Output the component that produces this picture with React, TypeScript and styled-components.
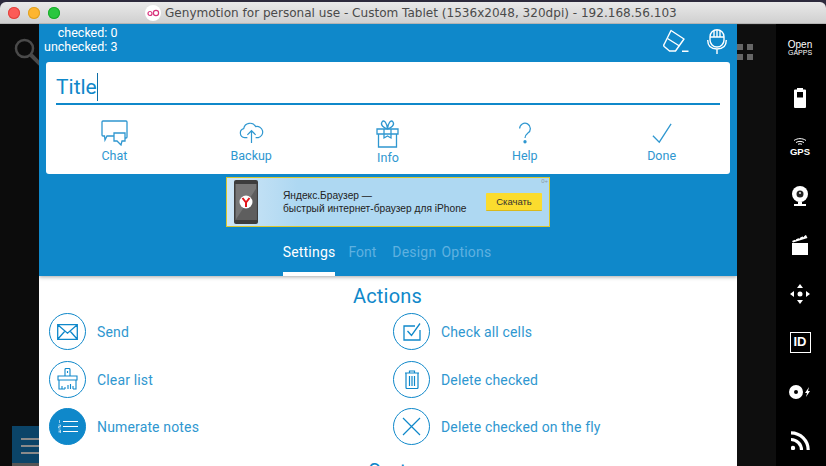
import React from 'react'
import styled, { createGlobalStyle } from 'styled-components'

const BLUE = '#0f88ca'

const GlobalStyle = createGlobalStyle`
  html, body { margin: 0; padding: 0; background: #2c2a3c; overflow: hidden; }
  body { font-family: Roboto, "Liberation Sans", sans-serif; }
`

const Window = styled.div`
  width: 826px;
  height: 466px;
  padding-top: 2px;
  box-sizing: border-box;
  display: flex;
  flex-direction: column;
  overflow: hidden;
`

const TitleBar = styled.div`
  height: 22px;
  flex: none;
  border-radius: 6px 6px 0 0;
  background: linear-gradient(#e9e9e9, #d0d0d0);
  border-bottom: 1px solid #b4b4b4;
  box-sizing: border-box;
  display: flex;
  align-items: center;
  position: relative;
`

const Lights = styled.div`
  display: flex;
  gap: 8px;
  padding-left: 8px;
`

const Light = styled.span<{ $color: string; $edge: string }>`
  width: 12px;
  height: 12px;
  border-radius: 50%;
  background: ${({ $color }) => $color};
  box-shadow: inset 0 0 0 1px ${({ $edge }) => $edge};
`

const WindowTitle = styled.div`
  position: absolute;
  left: 145px;
  top: 0;
  height: 22px;
  display: flex;
  align-items: center;
  gap: 4px;
  font-family: "DejaVu Sans", sans-serif;
  font-size: 12.05px;
  color: #4a4a4a;
  white-space: nowrap;
`

const Body = styled.div`
  flex: 1;
  min-height: 0;
  display: flex;
`

const LeftGutter = styled.div`
  width: 39px;
  flex: none;
  background: #0c0c0c;
  display: flex;
  flex-direction: column;
  justify-content: space-between;
  overflow: hidden;
`

const SearchSlot = styled.div`
  padding: 14px 0 0 14px;
`

const MenuTile = styled.div`
  margin-left: 12px;
  height: 40px;
  width: 27px;
  flex: none;
  background: #0b4468;
  box-sizing: border-box;
  padding: 12px 0 0 9px;
  display: flex;
  flex-direction: column;
  gap: 5px;
  border-bottom: 3px solid #555;
`

const MenuBar = styled.span`
  display: block;
  height: 2px;
  background: #8a8a8a;
`

const Dialog = styled.div`
  width: 698px;
  flex: none;
  display: flex;
  flex-direction: column;
  background: #fff;
  overflow: hidden;
`

const Header = styled.div`
  height: 252px;
  flex: none;
  background: ${BLUE};
  box-shadow: 0 1px 4px rgba(0, 0, 0, 0.35);
  padding: 0 7px;
  box-sizing: border-box;
  display: flex;
  flex-direction: column;
  position: relative;
`

const TopRow = styled.div`
  height: 38px;
  flex: none;
  display: flex;
  align-items: flex-start;
  justify-content: space-between;
`

const Counters = styled.div`
  padding-top: 2px;
  font-size: 12.5px;
  line-height: 14px;
  color: #fff;
  text-align: right;
  margin-left: -2px;
`

const TopIcons = styled.div`
  display: flex;
  gap: 18px;
  padding: 5px 3px 0 0;
`

const Card = styled.div`
  height: 112px;
  flex: none;
  background: #fff;
  border-radius: 3px;
  display: flex;
  flex-direction: column;
`

const TitleField = styled.div`
  margin: 0 10px;
  height: 39px;
  flex: none;
  border-bottom: 2px solid ${BLUE};
  display: flex;
  align-items: flex-end;
  padding-bottom: 2px;
  box-sizing: content-box;
  font-size: 21px;
  line-height: 28px;
  color: ${BLUE};
`

const Caret = styled.span`
  width: 1.5px;
  height: 28px;
  background: #0d6ea6;
`

const Tools = styled.div`
  flex: 1;
  display: grid;
  grid-template-columns: repeat(5, 1fr);
`

const Tool = styled.div`
  display: flex;
  flex-direction: column;
  align-items: center;
  justify-content: flex-start;
  padding-top: 14px;
  font-size: 12.5px;
  line-height: 14px;
  color: #2f97d0;
`

const ToolIcon = styled.div<{ $tall?: boolean }>`
  height: 28px;
  display: flex;
  align-items: center;
  justify-content: center;
  margin-bottom: ${({ $tall }) => ($tall ? '3.5px' : '1.5px')};
`

const AdSlot = styled.div`
  display: flex;
  justify-content: center;
  padding-top: 3px;
`

const Ad = styled.div`
  width: 324px;
  height: 50px;
  box-sizing: border-box;
  border: 1px solid #d9c62e;
  background: linear-gradient(90deg, #cfe6f6 0, #aed8f2 22%);
  display: flex;
  align-items: center;
  padding: 0 7px;
  position: relative;
  font-family: "Liberation Sans", sans-serif;
`

const AdText = styled.div`
  margin-left: 25px;
  flex: 1;
  font-size: 10.2px;
  line-height: 13px;
  color: #222;
  white-space: nowrap;
`

const AdButton = styled.div`
  width: 56px;
  height: 17px;
  background: #fbdc2e;
  border-bottom: 1px solid #d9b91c;
  border-radius: 1px;
  font-size: 9.5px;
  line-height: 17px;
  text-align: center;
  color: #333;
`

const AgeMark = styled.span`
  position: absolute;
  top: 0;
  right: 1px;
  font-size: 6px;
  color: #8b9aa5;
`

const Tabs = styled.div`
  flex: 1;
  display: flex;
  justify-content: center;
  gap: 13px;
  padding-right: 2px;
`

const Tab = styled.div<{ $active?: boolean }>`
  height: 100%;
  box-sizing: border-box;
  padding-top: 17px;
  font-size: 14px;
  letter-spacing: 0.2px;
  word-spacing: 1.5px;
  line-height: 17px;
  color: ${({ $active }) => ($active ? '#fff' : '#5fb1e0')};
  border-bottom: ${({ $active }) => ($active ? '4px solid #fff' : '4px solid transparent')};

  &:nth-child(2) {
    letter-spacing: 0;
  }
  &:last-child {
    margin-left: 3px;
  }
`

const Content = styled.div`
  flex: 1;
  min-height: 0;
  padding: 8px 10px 0;
  color: #2f97d0;
`

const SectionTitle = styled.div`
  font-size: 20px;
  line-height: 24px;
  text-align: center;
  letter-spacing: 0.2px;
  color: ${BLUE};
  padding-right: 1px;
`

const ActionGrid = styled.div`
  margin-top: 5px;
  display: grid;
  grid-template-columns: 344px 1fr;
  grid-auto-rows: 37px;
  row-gap: 10.5px;
`

const Action = styled.div`
  display: flex;
  align-items: center;
  gap: 11px;
  font-size: 14px;
  letter-spacing: 0.15px;
`

const ActionLabel = styled.span`
  padding-top: 1px;
`

const Circle = styled.div<{ $filled?: boolean }>`
  width: 37px;
  height: 37px;
  box-sizing: border-box;
  flex: none;
  border-radius: 50%;
  border: 1.5px solid ${BLUE};
  background: ${({ $filled }) => ($filled ? BLUE : 'transparent')};
  color: ${({ $filled }) => ($filled ? '#fff' : BLUE)};
  display: flex;
  align-items: center;
  justify-content: center;
`

const NextTitle = styled(SectionTitle)`
  margin-top: 14px;
`

const RightGutter = styled.div`
  width: 39px;
  flex: none;
  background: #0e0e0e;
  border-top: 1px solid #1c1c1c;
  box-sizing: border-box;
  padding-top: 19px;
`

const Dots = styled.div`
  display: grid;
  grid-template-columns: 6px 6px;
  gap: 4px;
`

const Dot = styled.span`
  height: 6px;
  background: #666;
`

const SideBar = styled.div`
  width: 50px;
  flex: none;
  background: #000;
  display: flex;
  flex-direction: column;
  align-items: center;
  color: #fff;
`

const SideItem = styled.div`
  height: 49px;
  flex: none;
  display: flex;
  flex-direction: column;
  align-items: center;
  justify-content: center;
  gap: 1px;
  padding-right: 2px;
`

const OpenLabel = styled.div`
  font-size: 10px;
  line-height: 9px;
  text-align: center;
  font-family: "Liberation Sans", sans-serif;
  span {
    display: block;
    font-size: 7px;
    line-height: 8px;
  }
`

const GpsLabel = styled.div`
  font-family: "Liberation Sans", sans-serif;
  font-weight: 700;
  font-size: 9.5px;
  line-height: 9px;
`

const IdBox = styled.div`
  width: 21px;
  height: 21px;
  box-sizing: border-box;
  border: 1.5px solid #fff;
  font-family: "Liberation Sans", sans-serif;
  font-weight: 700;
  font-size: 13px;
  line-height: 18px;
  text-align: center;
`

const line = { fill: 'none', stroke: 'currentColor', strokeWidth: 1.3 }

const ChatIcon = () => (
  <svg width="27" height="26" viewBox="0 0 27 26" {...line}>
    <path d="M2 1h23a1 1 0 0 1 1 1v15a1 1 0 0 1-1 1h-1M13 16H6l-2 4-.5-4H2a1 1 0 0 1-1-1V2a1 1 0 0 1 1-1" />
    <path d="M13 13h11v8h-3l-1 4-4-4h-3z" />
  </svg>
)
const CloudIcon = () => (
  <svg width="27" height="22" viewBox="0 0 27 24" {...line}>
    <path d="M9 17H6a5 5 0 0 1-1-9.800A7 7 0 0 1 18 5a5.500 5.500 0 0 1 3 12h-3" />
    <path d="M13.500 23V10M9 14l4.500-4.500L18 14" />
  </svg>
)
const GiftIcon = () => (
  <svg width="23" height="29" viewBox="0 0 23 29" {...line}>
    <path d="M1 10h21v5H1zM2.500 15v13h18V15M8 10v9l3.500-2 3.500 2v-9" />
    <path d="M11.500 10C8 9 4 6 6 3s5 1 5.500 7c.5-6 3.500-10 5.500-7s-2 6-5.500 7z" />
  </svg>
)
const HelpIcon = () => (
  <svg width="14" height="23" viewBox="0 0 17 26" {...line}>
    <path d="M2 7a6.500 6.500 0 1 1 10 5.500c-2 1.500-3.500 2.500-3.500 6" strokeWidth="1.5" />
    <circle cx="8.500" cy="23" r="2" fill="currentColor" stroke="none" />
  </svg>
)
const DoneIcon = () => (
  <svg width="20" height="21" viewBox="0 0 22 23" {...line}>
    <path d="M1 14l7 7L21 1" strokeWidth="1.4" />
  </svg>
)
const EraserIcon = () => (
  <svg width="26" height="24" viewBox="0 0 26 24" fill="none" stroke="#fff" strokeWidth="1.4">
    <path d="M8 1.500l13 8.500-8.500 12H6.500L1.200 17.500c-.6-.7-.6-1.500 0-2.300z" strokeLinejoin="round" />
    <path d="M4.500 9.500L16.500 17M19 22.300h6.500" />
  </svg>
)
const MicIcon = () => (
  <svg width="20" height="25" viewBox="0 0 20 25" fill="none" stroke="#fff" strokeWidth="1.4">
    <rect x="3" y="0.700" width="14" height="17.300" rx="7" />
    <path d="M3 8h14M7 1.500V8M10 1V8M13 1.500V8" />
    <path d="M.700 11c0 6 3 9 9.300 9s9.300-3 9.300-9M10 20v5" />
  </svg>
)
const MailIcon = () => (
  <svg width="21" height="16" viewBox="0 0 21 16" fill="none" stroke="currentColor" strokeWidth="1.3">
    <path d="M.7.7h19.600v14.600H.7zM.7.7l9.800 8.500L20.300.7M.7 15.300L8 7M20.300 15.300L13 7" />
  </svg>
)
const BrushIcon = () => (
  <svg width="21" height="22" viewBox="0 0 21 22" fill="none" stroke="currentColor" strokeWidth="1.1">
    <path d="M8 8V1.500c0-.5.500-1 1-1h3c.5 0 1 .5 1 1V8M1 8h19v4H1zM2 12v9h3v-3M5 21h3M19 12v9h-3M11 21v-4M13.500 21v-5M16 21v-3M8 21v-2M10.500 3v2" />
  </svg>
)
const ListIcon = () => (
  <svg width="20" height="13" viewBox="0 0 20 13" fill="none" stroke="currentColor">
    <path d="M5 1.500h15M5 6.500h15M5 11.500h15" strokeWidth="1.100" />
    <path d="M1.500 0v3M.500 5h2v1.500H.500V8h2M.500 10h2v3H.500M.500 11.500h2" strokeWidth=".6" />
  </svg>
)
const CheckBoxIcon = () => (
  <svg width="18" height="18" viewBox="0 0 18 18" fill="none" stroke="currentColor" strokeWidth="1.3">
    <path d="M12 3H1v14h16V7" />
    <path d="M4.500 8l4 4.500L17 .5" />
  </svg>
)
const TrashIcon = () => (
  <svg width="14" height="19" viewBox="0 0 14 19" fill="none" stroke="currentColor" strokeWidth="1.2">
    <path d="M0 3h14M4.500 3V1h5v2M1 3v14.500a1 1 0 0 0 1 1h10a1 1 0 0 0 1-1V3M4.500 6v10M7 6v10M9.500 6v10" />
  </svg>
)
const CrossIcon = () => (
  <svg width="19" height="19" viewBox="0 0 19 19" fill="none" stroke="currentColor" strokeWidth="1.2">
    <path d="M1 1l17 17M18 1L1 18" />
  </svg>
)
const SearchIcon = () => (
  <svg width="30" height="30" viewBox="0 0 30 30" fill="none" stroke="#4a4a4a">
    <circle cx="10.500" cy="10.500" r="8.500" strokeWidth="2.500" />
    <path d="M17 17l11 11" strokeWidth="4" />
  </svg>
)
const GenyLogo = () => (
  <svg width="16" height="16" viewBox="0 0 16 16">
    <circle cx="8" cy="8" r="8" fill="#fff" />
    <circle cx="5" cy="8.500" r="2" fill="none" stroke="#d8327c" strokeWidth="1.200" />
    <circle cx="11" cy="8" r="2.600" fill="none" stroke="#d8327c" strokeWidth="1.200" />
  </svg>
)
const BatteryIcon = () => (
  <svg width="12" height="20" viewBox="0 0 12 20" fill="#fff">
    <path d="M3 0h6v1.500h2a1 1 0 0 1 1 1V19a1 1 0 0 1-1 1H1a1 1 0 0 1-1-1V2.500a1 1 0 0 1 1-1h2zM3 4v5.500h6V4z" fillRule="evenodd" />
  </svg>
)
const WifiIcon = () => (
  <svg width="14" height="8" viewBox="0 0 14 8" fill="none" stroke="#fff" strokeWidth="1">
    <path d="M1 2.500c3.500-2.500 8.500-2.500 12 0M3 4.500c2.500-1.500 5.500-1.500 8 0M5 6.300c1.200-.6 2.800-.6 4 0" />
  </svg>
)
const WebcamIcon = () => (
  <svg width="18" height="20" viewBox="0 0 18 20">
    <circle cx="9" cy="8" r="8" fill="#fff" />
    <circle cx="9" cy="8" r="3.500" fill="#222" />
    <circle cx="9" cy="7" r="1.100" fill="#ddd" />
    <path d="M7 15.500h4V18H7zM3 18h12v2H3z" fill="#fff" />
  </svg>
)
const ClapIcon = () => (
  <svg width="16" height="20" viewBox="0 0 16 20" fill="#fff">
    <path d="M0 8h16v12H0zM0 6L14 0l1.500 3L1 7.500z" />
    <path d="M3 5l1.500-3M7 3.500l1.500-3M11 2l1.500-2" stroke="#000" strokeWidth="1.200" />
  </svg>
)
const MoveIcon = () => (
  <svg width="22" height="22" viewBox="0 0 22 22" fill="#fff">
    <circle cx="11" cy="11" r="2.500" />
    <path d="M11 1l3 4H8zM11 21l-3-4h6zM1 11l4-3v6zM21 11l-4 3V8z" />
  </svg>
)
const DiscIcon = () => (
  <svg width="22" height="14" viewBox="0 0 22 14" fill="#fff">
    <path d="M7 0a7 7 0 1 1 0 14A7 7 0 0 1 7 0zm0 5a2 2 0 1 0 0 4 2 2 0 0 0 0-4z" fillRule="evenodd" />
    <path d="M20 2l-4 6h2l-1 4 4-6h-2z" />
  </svg>
)
const CastIcon = () => (
  <svg width="19" height="19" viewBox="0 0 19 19" fill="none" stroke="#fff" strokeWidth="3.200">
    <path d="M0 1.800c9.500 0 17.200 7.700 17.200 17.200M0 8.500c5.800 0 10.500 4.700 10.500 10.500" />
    <circle cx="2" cy="17" r="2.200" fill="#fff" stroke="none" />
  </svg>
)

const tools = [
  { label: 'Chat', icon: <ChatIcon /> },
  { label: 'Backup', icon: <CloudIcon /> },
  { label: 'Info', icon: <GiftIcon />, tall: true },
  { label: 'Help', icon: <HelpIcon /> },
  { label: 'Done', icon: <DoneIcon /> },
]

const actions = [
  { label: 'Send', icon: <MailIcon /> },
  { label: 'Check all cells', icon: <CheckBoxIcon /> },
  { label: 'Clear list', icon: <BrushIcon /> },
  { label: 'Delete checked', icon: <TrashIcon /> },
  { label: 'Numerate notes', icon: <ListIcon />, filled: true },
  { label: 'Delete checked on the fly', icon: <CrossIcon /> },
]

const AdPhone = () => (
  <svg width="24" height="44" viewBox="0 0 24 44">
    <rect width="24" height="44" rx="2" fill="#3d3d3d" />
    <rect x="1.500" y="4" width="21" height="36" fill="#777" />
    <path d="M1.500 40L22.500 8v32z" fill="#5e5e5e" />
    <circle cx="12" cy="22" r="6.500" fill="#fff" />
    <path d="M8.500 18l3.500 4.500V27M15.500 18L12 22.500" fill="none" stroke="#e3161b" strokeWidth="2" />
  </svg>
)

export default function App() {
  return (
    <Window>
      <GlobalStyle />
      <TitleBar>
        <Lights>
          <Light $color="#fc5b57" $edge="#e0443e" />
          <Light $color="#fdb52f" $edge="#dea123" />
          <Light $color="#2ac73f" $edge="#1aab29" />
        </Lights>
        <WindowTitle>
          <GenyLogo />
          Genymotion for personal use - Custom Tablet (1536x2048, 320dpi) - 192.168.56.103
        </WindowTitle>
      </TitleBar>
      <Body>
        <LeftGutter>
          <SearchSlot>
            <SearchIcon />
          </SearchSlot>
          <MenuTile>
            <MenuBar />
            <MenuBar />
            <MenuBar />
          </MenuTile>
        </LeftGutter>
        <Dialog>
          <Header>
            <TopRow>
              <Counters>
                checked: 0
                <br />
                unchecked: 3
              </Counters>
              <TopIcons>
                <EraserIcon />
                <MicIcon />
              </TopIcons>
            </TopRow>
            <Card>
              <TitleField>
                Title
                <Caret />
              </TitleField>
              <Tools>
                {tools.map((t) => (
                  <Tool key={t.label}>
                    <ToolIcon $tall={t.tall}>{t.icon}</ToolIcon>
                    {t.label}
                  </Tool>
                ))}
              </Tools>
            </Card>
            <AdSlot>
              <Ad>
                <AdPhone />
                <AdText>
                  Яндекс.Браузер —
                  <br />
                  быстрый интернет-браузер для iPhone
                </AdText>
                <AdButton>Скачать</AdButton>
                <AgeMark>0+</AgeMark>
              </Ad>
            </AdSlot>
            <Tabs>
              <Tab $active>Settings</Tab>
              <Tab>Font</Tab>
              <Tab>Design Options</Tab>
            </Tabs>
          </Header>
          <Content>
            <SectionTitle>Actions</SectionTitle>
            <ActionGrid>
              {actions.map((a) => (
                <Action key={a.label}>
                  <Circle $filled={a.filled}>{a.icon}</Circle>
                  <ActionLabel>{a.label}</ActionLabel>
                </Action>
              ))}
            </ActionGrid>
            <NextTitle>Sort</NextTitle>
          </Content>
        </Dialog>
        <RightGutter>
          <Dots>
            <Dot />
            <Dot />
            <Dot />
            <Dot />
          </Dots>
        </RightGutter>
        <SideBar>
          <SideItem>
            <OpenLabel>
              Open
              <span>GAPPS</span>
            </OpenLabel>
          </SideItem>
          <SideItem>
            <BatteryIcon />
          </SideItem>
          <SideItem>
            <WifiIcon />
            <GpsLabel>GPS</GpsLabel>
          </SideItem>
          <SideItem>
            <WebcamIcon />
          </SideItem>
          <SideItem>
            <ClapIcon />
          </SideItem>
          <SideItem>
            <MoveIcon />
          </SideItem>
          <SideItem>
            <IdBox>ID</IdBox>
          </SideItem>
          <SideItem>
            <DiscIcon />
          </SideItem>
          <SideItem>
            <CastIcon />
          </SideItem>
        </SideBar>
      </Body>
    </Window>
  )
}
